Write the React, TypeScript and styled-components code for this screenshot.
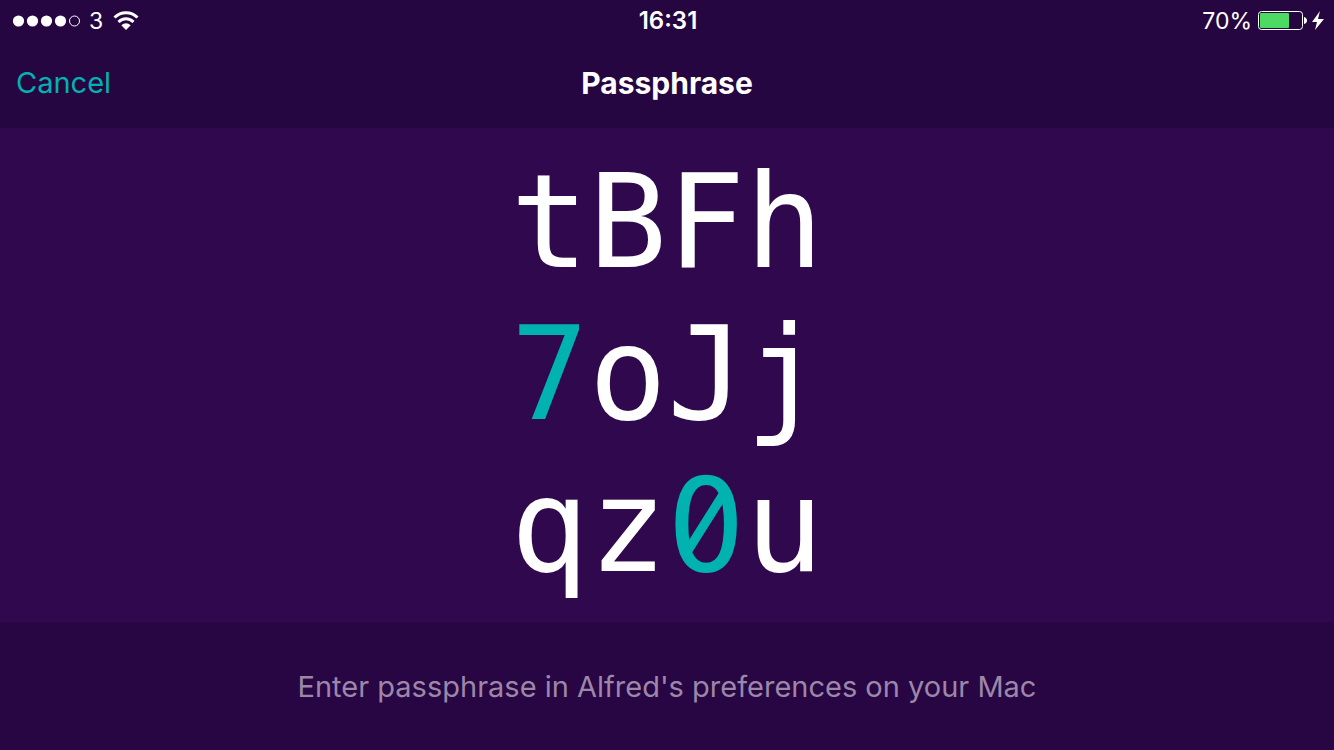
import React from "react";
import styled, { createGlobalStyle } from "styled-components";

const Global = createGlobalStyle`
  * { box-sizing: border-box; }
  body { margin: 0; background: #280543; font-family: Inter, "Liberation Sans", sans-serif; color: #fff; }
`;
const Screen = styled.div`
  min-height: 100vh;
  display: flex;
  flex-direction: column;
  background: #30084d;
`;
const Header = styled.header`
  height: 128px;
  background: #250640;
`;
const StatusBar = styled.div`
  display: grid;
  grid-template-columns: 1fr auto 1fr;
  align-items: center;
  height: 42px;
  padding: 0 10px 0 12px;
  font-size: 24px;
  line-height: 32px;
`;
const StatusGroup = styled.div<{ $end?: boolean }>`
  display: flex;
  align-items: center;
  justify-content: ${(p) => (p.$end ? "flex-end" : "flex-start")};
`;
const Time = styled.time`
  font-weight: 600;
`;
const Carrier = styled.span`
  margin: 0 10px 0 7px;
  font-size: 23px;
`;
const BatteryLevel = styled.span`
  margin-right: 6px;
  font-size: 23px;
`;
const NavBar = styled.nav`
  display: grid;
  grid-template-columns: 1fr auto 1fr;
  align-items: center;
  height: 82px;
  padding: 0 16px;
`;
const CancelButton = styled.button`
  justify-self: start;
  padding: 0;
  border: 0;
  background: none;
  color: #00b2b0;
  font: inherit;
  font-size: 29px;
  line-height: 40px;
  cursor: pointer;
`;
const Title = styled.h1`
  margin: 0;
  font-size: 30px;
  font-weight: 700;
  line-height: 40px;
`;
const Passphrase = styled.main`
  flex: 1;
  display: flex;
  flex-direction: column;
  align-items: center;
  padding: 18px 0 20px;
  font-family: "DejaVu Sans Mono", monospace;
  font-size: 130px;
  line-height: 152px;
`;
const Row = styled.div`
  display: flex;
`;
const Glyph = styled.span<{ $digit: boolean }>`
  position: relative;
  color: ${(p) => (p.$digit ? "#00b2b0" : "#fff")};
`;
const Slash = styled.svg`
  position: absolute;
  inset: 0;
  width: 100%;
  height: 100%;
`;
const Footer = styled.footer`
  display: flex;
  align-items: center;
  justify-content: center;
  height: 128px;
  padding-top: 2px;
  background: #280543;
  color: #9c87a8;
  font-size: 29px;
  line-height: 40px;
`;

const rows = ["tBFh", "7oJj", "qz0u"];

const Signal = () => (
  <svg width="70" height="14" viewBox="0 0 70 14" fill="#fff" aria-label="Signal strength 4 of 5">
    {[6, 20, 34, 48].map((x) => <circle key={x} cx={x + 0.5} cy="7" r="5.6" />)}
    <circle cx="62.5" cy="7" r="5" fill="none" stroke="#fff" />
  </svg>
);
const Wifi = () => (
  <svg width="26" height="20" viewBox="0 0 26 20" fill="none" stroke="#fff" strokeWidth="3" aria-label="Wi-Fi">
    <path d="M1.5 6.5C8 0 18 0 24.5 6.5" />
    <path d="M5.5 11C9.800 6.800 16.200 6.800 20.500 11" />
    <path d="M8.300 14.300Q13 10.200 17.700 14.300L13 19Z" fill="#fff" stroke="none" />
  </svg>
);
const Battery = () => (
  <svg width="66" height="20" viewBox="0 0 66 20" aria-label="Battery charging">
    <rect x="0.5" y="0.5" width="44" height="18" rx="3" fill="none" stroke="#fff" />
    <rect x="2" y="2" width="29" height="15" rx="1" fill="#4cd964" />
    <path d="M46 6Q49 7 49 9.5T46 13Z" fill="#fff" />
    <path d="M62 0L54 11H59L57 19L66 8H60Z" fill="#fff" />
  </svg>
);
/* Turns the dotted zero of the monospace face into a slashed one. */
const ZeroSlash = () => (
  <Slash viewBox="0 0 78 152" aria-hidden="true">
    <circle cx="39" cy="73" r="12" fill="#30084d" />
    <path d="M20 93L54 39L58 50L24 104Z" fill="#00b2b0" />
  </Slash>
);

export default function App() {
  return (
    <Screen>
      <Global />
      <Header>
        <StatusBar>
          <StatusGroup><Signal /><Carrier>3</Carrier><Wifi /></StatusGroup>
          <Time>16:31</Time>
          <StatusGroup $end><BatteryLevel>70%</BatteryLevel><Battery /></StatusGroup>
        </StatusBar>
        <NavBar>
          <CancelButton type="button">Cancel</CancelButton>
          <Title>Passphrase</Title>
        </NavBar>
      </Header>
      <Passphrase>
        {rows.map((row) => (
          <Row key={row}>
            {[...row].map((c) => (
              <Glyph key={c} $digit={/\d/.test(c)}>
                {c}
                {c === "0" && <ZeroSlash />}
              </Glyph>
            ))}
          </Row>
        ))}
      </Passphrase>
      <Footer>Enter passphrase in Alfred's preferences on your Mac</Footer>
    </Screen>
  );
}
